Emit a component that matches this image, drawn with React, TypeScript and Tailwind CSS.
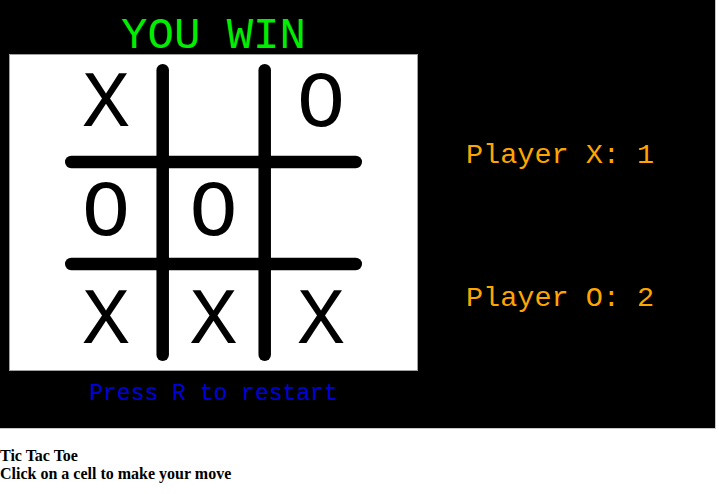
const board: string[][] = [
  ["X", "", "O"],
  ["O", "O", ""],
  ["X", "X", "X"],
];

function GridLines() {
  return (
    <svg className="absolute inset-0 h-full w-full" viewBox="0 0 407 315">
      <g stroke="#000" strokeWidth="12.5" strokeLinecap="round">
        <line x1="152.7" y1="15.25" x2="152.7" y2="299.75" />
        <line x1="254.7" y1="15.25" x2="254.7" y2="299.75" />
        <line x1="61.25" y1="107" x2="345.75" y2="107" />
        <line x1="61.25" y1="209" x2="345.75" y2="209" />
      </g>
    </svg>
  );
}

export default function App() {
  return (
    <div className="min-h-screen bg-white">
      <div className="flex h-[429px] w-[716px] border-r border-b border-[#c8c8c8] bg-black font-['Liberation_Mono','Courier_New',monospace]">
        <div className="ml-[9px] flex w-[409px] flex-col">
          <div className="h-[54px] pt-[19px] text-center text-[44px] leading-[34px] text-[#00ee00]">
            YOU WIN
          </div>
          <div className="relative h-[317px] w-[409px] border border-[#a0a0a0] bg-white">
            <GridLines />
            <div className="relative grid grid-cols-[repeat(3,98px)] auto-rows-[98px] gap-x-[9.5px] gap-y-[10.5px] pt-[1px] pl-[47px]">
              {board.flat().map((cell, i) => (
                <div key={i} className="text-center text-[80px] leading-[98px] text-black">
                  {cell}
                </div>
              ))}
            </div>
          </div>
          <div className="text-center text-[23px] leading-[46px] text-[#0000dd]">
            Press R to restart
          </div>
        </div>
        <div className="flex flex-col pt-[141px] pl-[48px] text-[28.5px] leading-[30px] text-[#ffa500]">
          <div>Player X: 1</div>
          <div className="mt-[113px]">Player O: 2</div>
        </div>
      </div>
      <div className="mt-[18px] font-['Liberation_Serif','Times_New_Roman',serif] text-[16px] leading-[18.4px] font-bold text-black">
        <div>Tic Tac Toe</div>
        <div>Click on a cell to make your move</div>
      </div>
    </div>
  );
}
